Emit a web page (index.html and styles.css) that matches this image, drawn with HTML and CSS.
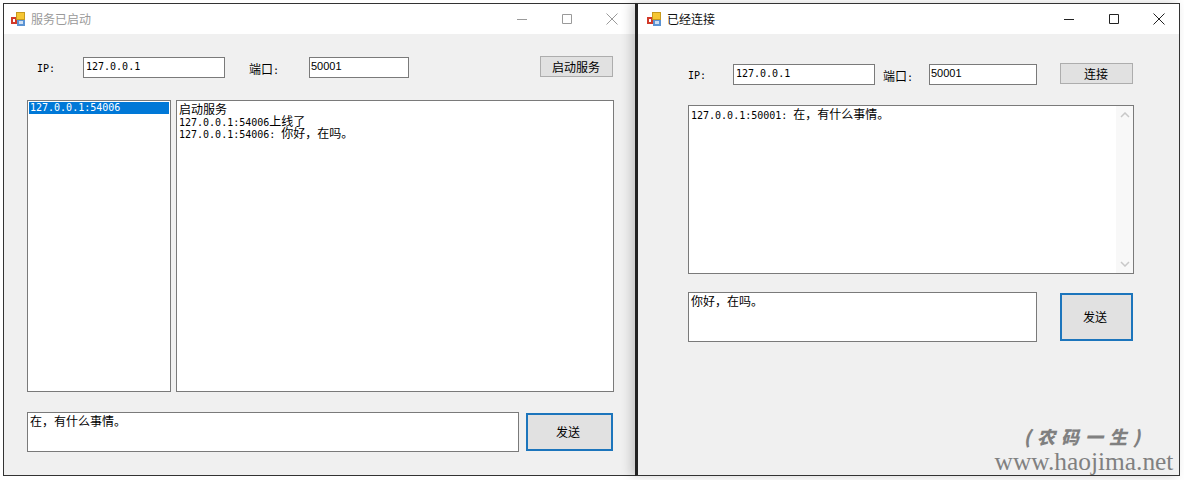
FILE: index.html
```html
<!DOCTYPE html>
<html lang="zh">
<head>
<meta charset="utf-8">
<title>Socket</title>
<link rel="stylesheet" href="styles.css">
</head>
<body>
<svg class="defs" width="0" height="0" aria-hidden="true">
  <symbol id="app" viewBox="0 0 14 14">
    <rect x="0" y="5" width="6" height="7" fill="#d13a2a"/>
    <rect x="2" y="7" width="2" height="3" fill="#fff"/>
    <rect x="5.5" y=".5" width="8" height="7" fill="#f6c633" stroke="#c79a1e"/>
    <rect x="6" y="8" width="8" height="6" fill="#5b93d3"/>
    <rect x="8" y="9" width="4" height="3" fill="#cfe0f3"/>
  </symbol>
  <symbol id="min" viewBox="0 0 12 12"><path d="M1 6.5h10" fill="none" stroke="currentColor"/></symbol>
  <symbol id="max" viewBox="0 0 12 12"><path d="M1.5 1.5h9v9h-9z" fill="none" stroke="currentColor"/></symbol>
  <symbol id="close" viewBox="0 0 12 12"><path d="M.5.5l11 11M11.5.5l-11 11" fill="none" stroke="currentColor"/></symbol>
  <symbol id="up" viewBox="0 0 10 6"><path d="M1 5l4-4 4 4" fill="none" stroke="currentColor" stroke-width="1.5"/></symbol>
  <symbol id="down" viewBox="0 0 10 6"><path d="M1 1l4 4 4-4" fill="none" stroke="currentColor" stroke-width="1.5"/></symbol>
</svg>

<section class="window server">
  <header class="titlebar inactive">
    <svg class="app-icon"><use href="#app"/></svg>
    <span class="title">服务已启动</span>
    <div class="caption">
      <svg class="cap-icon"><use href="#min"/></svg>
      <svg class="cap-icon"><use href="#max"/></svg>
      <svg class="cap-icon"><use href="#close"/></svg>
    </div>
  </header>
  <div class="client">
    <div class="row server-top">
      <label class="label ip-label lat">IP:</label>
      <div class="field ip-field lat">127.0.0.1</div>
      <label class="label port-label">端口<span class="lat">:</span></label>
      <div class="field port-field sans">50001</div>
      <button class="btn start">启动服务</button>
    </div>
    <div class="row server-mid">
      <div class="box listbox">
        <div class="list-item lat">127.0.0.1:54006</div>
      </div>
      <div class="box log server-log">
        <div class="line">启动服务</div>
        <div class="line"><span class="lat">127.0.0.1:54006</span>上线了</div>
        <div class="line"><span class="lat">127.0.0.1:54006: </span>你好，在吗。</div>
      </div>
    </div>
    <div class="row server-bottom">
      <div class="box msg server-msg">在，有什么事情。</div>
      <button class="btn send server-send">发送</button>
    </div>
  </div>
</section>

<section class="window client-win">
  <header class="titlebar">
    <svg class="app-icon"><use href="#app"/></svg>
    <span class="title">已经连接</span>
    <div class="caption">
      <svg class="cap-icon"><use href="#min"/></svg>
      <svg class="cap-icon"><use href="#max"/></svg>
      <svg class="cap-icon"><use href="#close"/></svg>
    </div>
  </header>
  <div class="client">
    <div class="row client-top">
      <label class="label c-ip-label lat">IP:</label>
      <div class="field ip-field lat">127.0.0.1</div>
      <label class="label c-port-label">端口<span class="lat">:</span></label>
      <div class="field c-port-field sans">50001</div>
      <button class="btn connect">连接</button>
    </div>
    <div class="box log client-log">
      <div class="log-text line"><span class="lat">127.0.0.1:50001: </span>在，有什么事情。</div>
      <div class="scrollbar">
        <svg class="chev"><use href="#up"/></svg>
        <svg class="chev"><use href="#down"/></svg>
      </div>
    </div>
    <div class="row client-bottom">
      <div class="box msg client-msg">你好，在吗。</div>
      <button class="btn send client-send">发送</button>
    </div>
  </div>
  <div class="watermark">
    <div class="wm-cn">(农码一生)</div>
    <div class="wm-url">www.haojima.net</div>
  </div>
</section>
</body>
</html>
```

FILE: styles.css
```css
* { box-sizing: border-box; }
html, body { margin: 0; padding: 0; }
body {
  position: relative;
  width: 1184px;
  height: 480px;
  overflow: hidden;
  background: #fff;
  color: #000;
  font: 12px/12px "Noto Sans CJK SC", sans-serif;
}
.defs { position: absolute; }
.lat { font-family: "DejaVu Sans Mono", monospace; font-size: 10px; white-space: pre; }
.sans { font-family: "Liberation Sans", sans-serif; font-size: 11px; }
.line { height: 12px; white-space: nowrap; }

.window {
  position: absolute;
  top: 3px;
  height: 473px;
  display: flex;
  flex-direction: column;
  background: #f0f0f0;
  border: 1px solid #333;
}
.server { left: 3px; width: 633px; border-right: 0; }
.client-win {
  left: 635px;
  width: 545px;
  border-left: 3px solid #222;
  box-shadow: -4px 0 10px rgba(0, 0, 0, .18);
}

.titlebar {
  flex: none;
  height: 30px;
  display: flex;
  align-items: center;
  background: #fff;
  padding-left: 7px;
}
.client-win .titlebar { padding-left: 9px; }
.app-icon { width: 14px; height: 14px; flex: none; }
.title { margin-left: 6px; color: #111; }
.inactive .title { color: #9a9a9a; }
.caption { margin-left: auto; display: flex; margin-right: 14px; }
.inactive .caption { margin-right: 18px; }
.cap-icon { width: 12px; height: 12px; margin-left: 33px; color: #222; }
.inactive .cap-icon { color: #9a9a9a; }

.client { flex: 1; display: flex; flex-direction: column; }
.row { display: flex; align-items: flex-start; }

.label { line-height: 12px; }
.field, .box {
  background: #fff;
  border: 1px solid #7a7a7a;
}
.field {
  height: 21px;
  line-height: 17px;
  padding-left: 2px;
  margin-top: 1px;
}
.sans.field { padding-left: 1px; }
.btn {
  margin: 0;
  padding: 0 1px 0 0;
  background: #e1e1e1;
  border: 1px solid #adadad;
  color: #000;
  font: inherit;
}

/* server window */
.server-top { padding: 22px 23px 0 33px; }
.ip-label { width: 46px; margin-top: 7px; }
.ip-field { width: 142px; }
.port-label { width: 60px; margin: 7px 0 0 24px; }
.port-field { width: 100px; }
.start { width: 73px; height: 21px; margin-left: auto; }

.server-mid { margin: 22px 0 0 23px; gap: 5px; }
.listbox { width: 144px; height: 292px; padding: 1px; }
.list-item {
  height: 12px;
  padding-left: 1px;
  background: #0078d7;
  color: #fff;
}
.log { padding: 2px; }
.server-log { width: 438px; height: 292px; }

.server-bottom { margin: 20px 0 0 23px; gap: 7px; }
.msg { padding: 2px; }
.server-msg { width: 492px; height: 40px; }
.send { border: 2px solid #1c75bc; margin-top: 1px; padding-right: 3px; }
.server-send { width: 87px; height: 38px; }

/* client window */
.client-top { padding: 29px 0 0 50px; }
.c-ip-label { width: 45px; margin-top: 7px; }
.c-port-label { width: 46px; margin: 7px 0 0 8px; }
.c-port-field { width: 108px; }
.connect { width: 73px; height: 21px; margin-left: 23px; }

.client-log {
  display: flex;
  justify-content: space-between;
  width: 446px;
  height: 169px;
  margin: 20px 0 0 50px;
  padding: 0 0 0 2px;
}
.log-text { padding-top: 2px; height: 14px; }
.scrollbar {
  width: 17px;
  display: flex;
  flex-direction: column;
  justify-content: space-between;
  align-items: center;
  padding: 6px 0;
  background: #f8f8f8;
  color: #c8c8c8;
}
.chev { width: 10px; height: 6px; }

.client-bottom { margin: 18px 0 0 50px; gap: 23px; }
.client-msg { width: 349px; height: 50px; }
.client-send { width: 73px; height: 48px; }

/* watermark sits over the client window */
.watermark {
  position: absolute;
  right: 5px;
  bottom: 1px;
  width: 180px;
  display: flex;
  flex-direction: column;
  align-items: center;
  color: #808080;
}
.wm-cn {
  padding-left: 2px;
  font: italic 900 18px/24px "Noto Sans CJK SC", sans-serif;
  letter-spacing: 6px;
  white-space: nowrap;
}
.wm-url {
  font: 25.4px/26px "Liberation Serif", serif;
  white-space: nowrap;
}
```
